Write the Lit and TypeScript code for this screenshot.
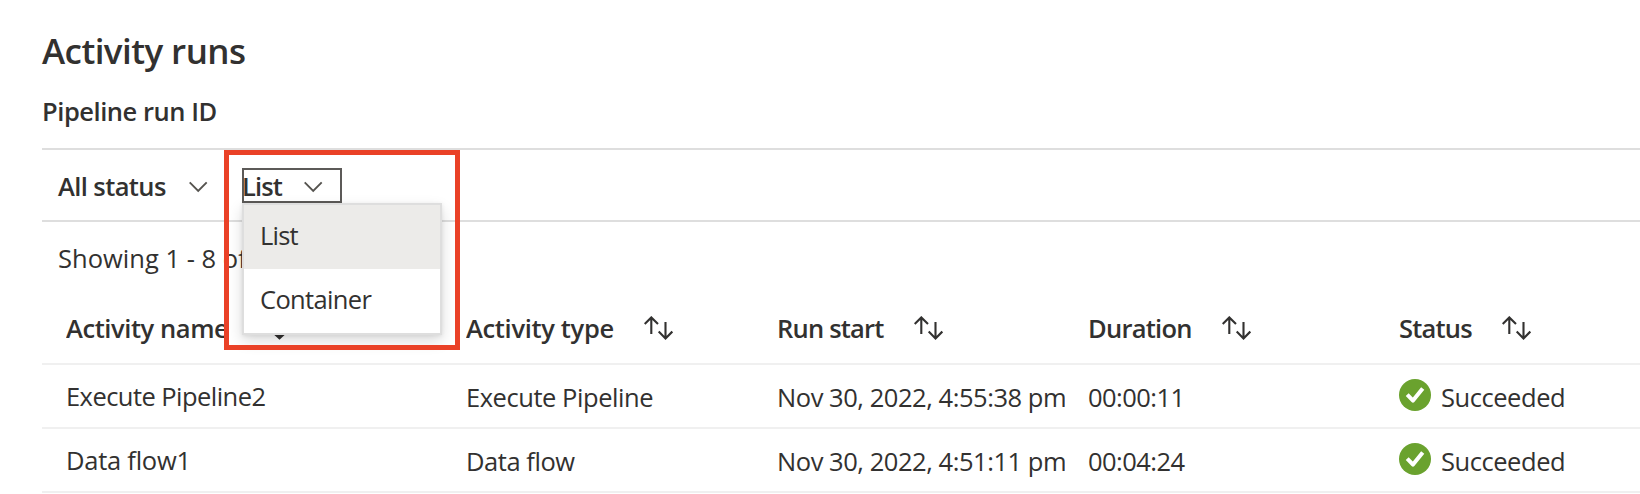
import { LitElement, html, css } from "lit";
import { customElement, property, state } from "lit/decorators.js";
import { classMap } from "lit/directives/class-map.js";

interface Column {
  label: string;
  cls: string;
}

interface Run {
  name: string;
  type: string;
  start: string;
  duration: string;
  status: string;
}

const COLUMNS: Column[] = [
  { label: "Activity name", cls: "h-name" },
  { label: "Activity type", cls: "h-type" },
  { label: "Run start", cls: "h-start" },
  { label: "Duration", cls: "h-duration" },
  { label: "Status", cls: "h-status" },
];

const RUNS: Run[] = [
  { name: "Execute Pipeline2", type: "Execute Pipeline", start: "Nov 30, 2022, 4:55:38 pm", duration: "00:00:11", status: "Succeeded" },
  { name: "Data flow1", type: "Data flow", start: "Nov 30, 2022, 4:51:11 pm", duration: "00:04:24", status: "Succeeded" },
];

@customElement("chevron-icon")
export class ChevronIcon extends LitElement {
  static styles = css`
    :host { display: block; width: 19px; height: 12px; margin-top: 3px; }
    svg { display: block; }
    path { fill: none; stroke: #55534f; stroke-width: 1.9; }
  `;
  render() {
    return html`<svg width="19" height="12" viewBox="0 0 19 12"><path d="M.7 1.3 9.2 9.8 17.7 1.3" /></svg>`;
  }
}

@customElement("sort-icon")
export class SortIcon extends LitElement {
  @property({ type: Boolean }) active = false;
  static styles = css`
    :host { display: block; width: 29px; height: 24px; flex: none; }
    svg { display: block; }
    path { fill: none; stroke: #323130; stroke-width: 2.1; }
    .bold { stroke-width: 3.2; }
  `;
  render() {
    return html`<svg width="29" height="24" viewBox="0 0 29 24">
      <path d="M.7 8 7.3 1.4 14 8M7.3 1.4V18" />
      <path class=${classMap({ bold: this.active })} d=${this.active ? "M15 15.5 21.5 21.6 28 15.5M21.5 6V21.6" : "M14.7 15.6 21.5 22.4 28.3 15.6M21.5 6V22.4"} />
    </svg>`;
  }
}

@customElement("success-icon")
export class SuccessIcon extends LitElement {
  static styles = css`
    :host { display: block; width: 32px; height: 32px; flex: none; }
    svg { display: block; }
    circle { fill: #6aa22e; }
    path { fill: none; stroke: #fff; stroke-width: 4; stroke-linejoin: round; }
  `;
  render() {
    return html`<svg width="32" height="32" viewBox="0 0 32 32">
      <circle cx="16" cy="16" r="16" />
      <path d="M8.2 15.6 14 21.6 23.7 9.4" />
    </svg>`;
  }
}

@customElement("app-root")
export class AppRoot extends LitElement {
  @state() private view = "List";

  static styles = css`
    :host {
      display: block;
      height: 494px;
      box-sizing: border-box;
      padding: 31px 0 0 42px;
      overflow: hidden;
      background: #fff;
      color: #323130;
      font: 400 25.5px/34px "Open Sans", "Noto Sans", sans-serif;
      letter-spacing: -0.45px;
      white-space: nowrap;
    }
    h1 { margin: 0 0 23px; font-size: 35px; line-height: 40px; font-weight: 600; letter-spacing: -0.57px; }
    h2 { margin: 0 0 20px; font-size: 25.5px; line-height: 34px; font-weight: 600; letter-spacing: -0.45px; }
    .toolbar {
      display: flex;
      box-sizing: border-box;
      height: 74px;
      padding: 18px 0 0 16px;
      border-top: 2px solid #dedede;
      border-bottom: 2px solid #dedede;
      font-weight: 600;
    }
    .status { display: flex; align-items: center; width: 184px; height: 35px; letter-spacing: -0.59px; }
    .status-label { width: 130.5px; }
    .view { position: relative; width: 100px; height: 35px; }
    .combo {
      display: flex;
      align-items: center;
      box-sizing: border-box;
      width: 100px;
      height: 35px;
      border: 2px solid #5c5a58;
      letter-spacing: -0.9px;
    }
    .combo-label { width: 62px; margin-left: -2px; }
    .menu {
      position: absolute;
      z-index: 1;
      left: 0;
      top: 35px;
      box-sizing: border-box;
      width: 200px;
      height: 132px;
      border: 2px solid #dedede;
      background: #fff;
      box-shadow: 0 6px 14px rgba(0, 0, 0, 0.14), 0 1px 4px rgba(0, 0, 0, 0.08);
      font-weight: 400;
    }
    .item { height: 64px; line-height: 60px; padding-left: 16px; letter-spacing: -0.65px; }
    .item.selected { background: #ecebe9; letter-spacing: -0.8px; }
    .highlight {
      position: absolute;
      z-index: 2;
      left: -18px;
      top: -18px;
      box-sizing: border-box;
      width: 236px;
      height: 200px;
      border: 5px solid #ea4127;
      pointer-events: none;
    }
    .summary { padding-left: 16px; line-height: 72px; letter-spacing: 0.02px; }
    .row {
      display: grid;
      grid-template-columns: 400px 311px 311px 311px 1fr;
      box-sizing: border-box;
      height: 64px;
      padding-left: 24px;
      border-bottom: 2px solid #f0f0f0;
    }
    .head { height: 71px; font-weight: 600; }
    .cell { display: flex; align-items: center; min-width: 0; margin-right: 23px; overflow: hidden; }
    .value { padding-top: 2px; }
    .name { letter-spacing: -0.55px; }
    .name.short { letter-spacing: -0.25px; }
    .time { letter-spacing: -0.55px; }
    .result { gap: 10px; }
    .result success-icon { margin-top: -2px; }
    .head .cell { gap: 30px; padding-bottom: 2px; }
    .head sort-icon { margin-top: 1px; }
    .h-name { letter-spacing: -0.42px; }
    .h-type { letter-spacing: -0.33px; }
    .h-start { letter-spacing: -0.79px; }
    .h-duration { letter-spacing: -0.74px; }
    .h-status { letter-spacing: -0.78px; }
  `;

  private renderRun(r: Run) {
    return html`<div class="row">
      <div class="cell"><span class=${classMap({ name: true, short: r.name.length < 12 })}>${r.name}</span></div>
      <div class="cell"><span class="value">${r.type}</span></div>
      <div class="cell"><span class="value">${r.start}</span></div>
      <div class="cell"><span class="value time">${r.duration}</span></div>
      <div class="cell result"><success-icon></success-icon><span class="value">${r.status}</span></div>
    </div>`;
  }

  render() {
    return html`
      <h1>Activity runs</h1>
      <h2>Pipeline run ID</h2>
      <div class="toolbar">
        <div class="status"><span class="status-label">All status</span><chevron-icon></chevron-icon></div>
        <div class="view">
          <div class="combo"><span class="combo-label">${this.view}</span><chevron-icon></chevron-icon></div>
          <div class="menu">
            ${["List", "Container"].map(
              (o) => html`<div class=${classMap({ item: true, selected: o === this.view })} @click=${() => (this.view = o)}>${o}</div>`
            )}
          </div>
          <div class="highlight"></div>
        </div>
      </div>
      <div class="summary">Showing 1 - 8 of 8</div>
      <div class="row head">
        ${COLUMNS.map(
          (c, i) => html`<div class="cell ${c.cls}"><span>${c.label}</span><sort-icon ?active=${i === 0}></sort-icon></div>`
        )}
      </div>
      ${RUNS.map((r) => this.renderRun(r))}
    `;
  }
}
